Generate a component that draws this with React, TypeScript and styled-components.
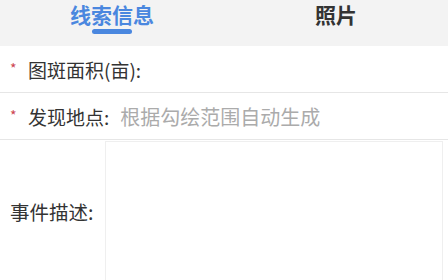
import styled, { createGlobalStyle } from 'styled-components';
import { useState } from 'react';

const GlobalStyle = createGlobalStyle`
  body {
    margin: 0;
    background: #ffffff;
    font-family: 'Noto Sans CJK SC', 'Noto Sans', sans-serif;
  }
`;

const TABS = ['线索信息', '照片'];

const App = () => {
  const [active, setActive] = useState(0);

  return (
    <>
      <GlobalStyle />
      <Page>
        <TabBar>
          {TABS.map((t, i) => (
            <Tab key={t} onClick={() => setActive(i)}>
              <TabText $active={i === active}>{t}</TabText>
              <TabLine $active={i === active} />
            </Tab>
          ))}
        </TabBar>

        <Row>
          <Required>*</Required>
          <Label>图斑面积(亩):</Label>
        </Row>
        <Row>
          <Required>*</Required>
          <Label>发现地点:</Label>
          <Placeholder>根据勾绘范围自动生成</Placeholder>
        </Row>

        <DescRow>
          <DescLabel>事件描述:</DescLabel>
          <DescArea />
        </DescRow>
      </Page>
    </>
  );
};

const Page = styled.div`
  width: 448px;
  height: 280px;
  overflow: hidden;
  display: flex;
  flex-direction: column;
`;

const TabBar = styled.div`
  display: grid;
  grid-template-columns: 1fr 1fr;
  height: 46px;
  background: #f3f3f3;
  flex-shrink: 0;
`;

const Tab = styled.div`
  display: flex;
  flex-direction: column;
  align-items: center;
  padding-top: 2px;
  cursor: pointer;
`;

const TabText = styled.span<{ $active: boolean }>`
  font-size: 21px;
  line-height: 24px;
  font-weight: 700;
  color: ${p => (p.$active ? '#4a87df' : '#333333')};
`;

const TabLine = styled.div<{ $active: boolean }>`
  width: 40px;
  height: 5px;
  border-radius: 3px;
  margin-top: 3px;
  background: ${p => (p.$active ? '#4a87df' : 'transparent')};
`;

const Row = styled.div`
  display: flex;
  align-items: center;
  height: 46px;
  padding-left: 10px;
  border-bottom: 1.5px solid #e6e6e6;
  flex-shrink: 0;
`;

const Required = styled.span`
  width: 18px;
  color: #cc4450;
  font-size: 14px;
  line-height: 1;
  margin-top: -3px;
`;

const Label = styled.span`
  font-size: 19px;
  color: #333333;
`;

const Placeholder = styled.span`
  margin-left: 11px;
  font-size: 20px;
  color: #ababab;
`;

const DescRow = styled.div`
  display: flex;
  align-items: center;
  height: 146px;
  flex-shrink: 0;
`;

const DescLabel = styled.span`
  width: 95px;
  padding-left: 10px;
  font-size: 19.5px;
  color: #333333;
  margin-top: -4px;
`;

const DescArea = styled.div`
  align-self: stretch;
  flex: 1;
  margin: 1px 5px 0 0;
  border: 1px solid #efefef;
  border-bottom: none;
`;

export default App;
